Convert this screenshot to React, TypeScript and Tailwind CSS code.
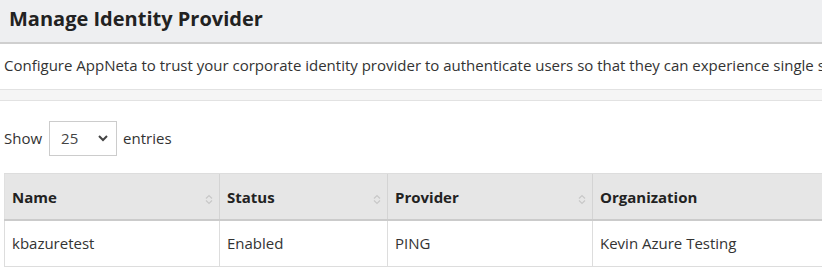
import React from "react";

const SortIcon = () => (
  <svg width="8" height="11" viewBox="0 0 8 11" className="shrink-0 mt-[4px]">
    <path d="M1 4.5 L4 1.5 L7 4.5" fill="none" stroke="#c8c8c8" strokeWidth="1.2" />
    <path d="M1 6.5 L4 9.5 L7 6.5" fill="none" stroke="#c8c8c8" strokeWidth="1.2" />
  </svg>
);

const columns = [
  { label: "Name", width: "w-[215px]", sort: true },
  { label: "Status", width: "w-[168px]", sort: true },
  { label: "Provider", width: "w-[205px]", sort: true },
  { label: "Organization", width: "w-[260px]", sort: false },
];

const rows = [["kbazuretest", "Enabled", "PING", "Kevin Azure Testing"]];

export default function App() {
  return (
    <div className="w-[822px] h-[270px] overflow-hidden bg-white text-[#333] font-['Open_Sans',sans-serif]">
      <div className="h-[44px] bg-[#eeeff1] border-b-2 border-[#cfcfcf] flex items-center px-[9px] pb-[5px]">
        <h1 className="text-[20px] font-bold text-[#222] whitespace-nowrap">Manage Identity Provider</h1>
      </div>
      <div className="h-[45px] flex items-center px-[4px] pb-[2px] text-[15px] whitespace-nowrap">
        Configure AppNeta to trust your corporate identity provider to authenticate users so that they can experience single sign-on.
      </div>
      <div className="h-[12px] bg-[#f5f5f5] border-y border-[#e2e2e2]" />
      <div className="px-[4px]">
        <div className="flex items-center h-[34px] mt-[20px] text-[15px]">
          <span>Show</span>
          <div className="ml-[7px] w-[68px] h-[35px] border border-[#ccc] flex items-center justify-between pl-[11px] pr-[8px]">
            <span className="text-[#444]">25</span>
            <svg width="10" height="8" viewBox="0 0 10 8">
              <path d="M1 2 L5 6 L9 2" fill="none" stroke="#444" strokeWidth="2" />
            </svg>
          </div>
          <span className="ml-[6px]">entries</span>
        </div>
        <div className="mt-[18px] w-[900px] border-y border-[#ddd] text-[15px]">
          <div className="flex h-[47px] bg-[#e6e6e6] border-b-2 border-[#cbcbcb]">
            {columns.map((c, i) => (
              <div
                key={c.label}
                className={`${c.width} flex items-center justify-between pl-[7px] pr-[6px] pt-[2px] font-bold text-[#222] ${i > 0 ? "border-l border-[#d4d4d4]" : "border-l border-[#e0e0e0]"}`}
              >
                <span>{c.label}</span>
                {c.sort && <SortIcon />}
              </div>
            ))}
          </div>
          {rows.map((r) => (
            <div key={r[0]} className="flex h-[45px]">
              {r.map((v, i) => (
                <div key={i} className={`${columns[i].width} flex items-center pl-[7px] border-l border-[#ddd]`}>
                  {v}
                </div>
              ))}
            </div>
          ))}
        </div>
      </div>
    </div>
  );
}
